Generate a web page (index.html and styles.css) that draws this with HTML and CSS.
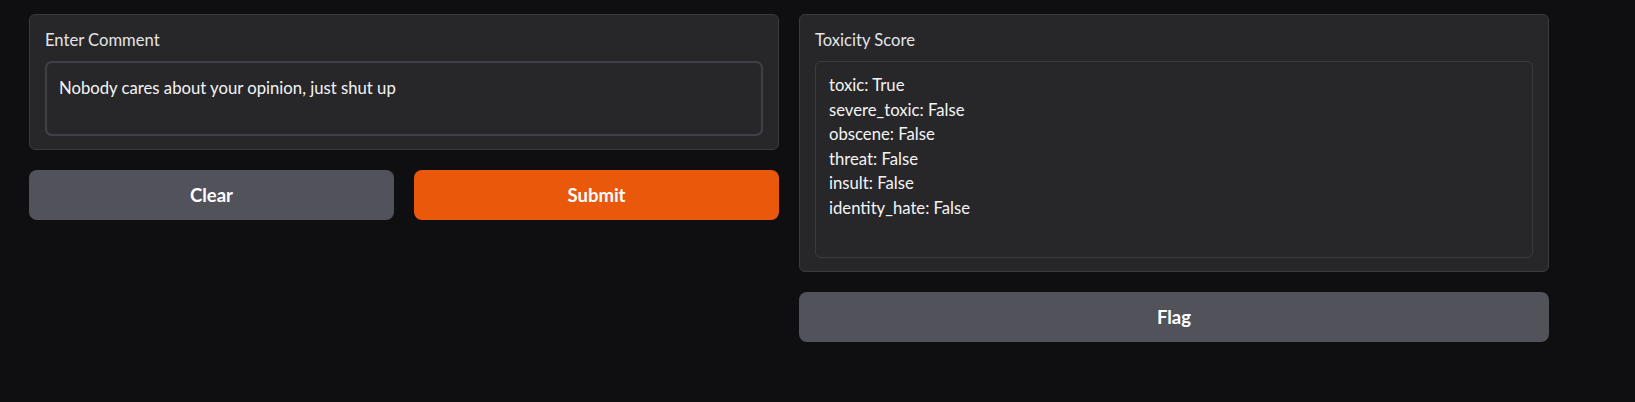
FILE: index.html
```html
<!DOCTYPE html>
<html lang="en">
<head>
<meta charset="utf-8">
<title>Toxicity Classifier</title>
<link rel="stylesheet" href="styles.css">
</head>
<body>
<main class="app">
  <section class="column">
    <div class="panel">
      <label class="label" for="comment">Enter Comment</label>
      <textarea id="comment" class="input" rows="2">Nobody cares about your opinion, just shut up</textarea>
    </div>
    <div class="btn-row">
      <button class="btn btn-secondary">Clear</button>
      <button class="btn btn-primary">Submit</button>
    </div>
  </section>
  <section class="column">
    <div class="panel panel-output">
      <div class="label">Toxicity Score</div>
      <div class="output">toxic: True
severe_toxic: False
obscene: False
threat: False
insult: False
identity_hate: False</div>
    </div>
    <button class="btn btn-secondary btn-full">Flag</button>
  </section>
</main>
</body>
</html>
```

FILE: styles.css
```css
* { box-sizing: border-box; }

html, body {
  margin: 0;
  background: #0f0f11;
  height: 100%;
}

body {
  font-family: Lato, "Noto Sans", sans-serif;
  color: #f4f4f5;
}

.app {
  display: flex;
  gap: 20px;
  padding: 14px 0 0 29px;
  align-items: flex-start;
}

.column {
  width: 750px;
  display: flex;
  flex-direction: column;
  gap: 20px;
}

.panel {
  background: #27272a;
  border: 1px solid #3a3a40;
  border-radius: 6px;
  padding: 15px 15px 13px;
  display: flex;
  flex-direction: column;
}

.label {
  display: block;
  font-size: 16.6px;
  line-height: 20px;
  color: #e4e4e7;
  margin-bottom: 11px;
}

.input {
  display: block;
  width: 100%;
  height: 75px;
  resize: none;
  background: #27272a;
  border: 2px solid #404048;
  border-radius: 7px;
  padding: 13px 12px 11px;
  font-family: Lato, "Noto Sans", sans-serif;
  font-size: 16.7px;
  line-height: 24.5px;
  color: #f4f4f5;
  outline: none;
}

.output {
  height: 197px;
  border: 1px solid #3a3a40;
  border-radius: 6px;
  padding: 11px 13px;
  white-space: pre-line;
  font-size: 16.7px;
  line-height: 24.5px;
  color: #f4f4f5;
}

.btn-row {
  display: flex;
  gap: 20px;
}

.btn {
  flex: 1;
  height: 50px;
  border: none;
  border-radius: 8px;
  font-family: Lato, "Noto Sans", sans-serif;
  font-weight: 700;
  font-size: 18.5px;
  color: #ffffff;
  cursor: pointer;
}

.btn-secondary { background: #52525b; }
.btn-primary { background: #ea580c; }
.btn-full { width: 100%; flex: none; }
```
